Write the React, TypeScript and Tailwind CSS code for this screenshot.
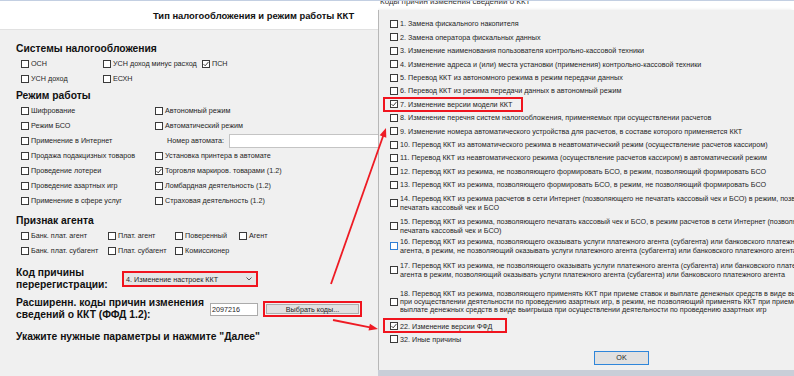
import React from "react";

const Check = () => (
  <svg width="6" height="6" viewBox="0 0 6 6" className="block">
    <path d="M0.5 3.1 L2.2 4.8 L5.5 0.9" fill="none" stroke="#2b2b2b" strokeWidth="0.9" />
  </svg>
);

function Cb({ checked = false, blue = false }: { checked?: boolean; blue?: boolean }) {
  return (
    <span
      className={`flex items-center justify-center w-[8px] h-[8px] shrink-0 bg-white border ${
        blue ? "border-[#2f7fd6]" : "border-[#3a3a3a]"
      }`}
    >
      {checked && <Check />}
    </span>
  );
}

function Opt({ label, checked }: { label: string; checked?: boolean }) {
  return (
    <div className="flex items-center gap-[2px] h-[15px]">
      <Cb checked={checked} />
      <span className="text-[7.2px] leading-[9px] text-[#1f1f1f] whitespace-nowrap">{label}</span>
    </div>
  );
}

function H({ children, className = "" }: { children: React.ReactNode; className?: string }) {
  return (
    <div className={`text-[10.3px] leading-[14px] h-[14px] font-bold text-[#111] whitespace-nowrap ${className}`}>
      {children}
    </div>
  );
}

type DI = {
  lines: string[];
  h: string;
  lh?: string;
  checked?: boolean;
  blue?: boolean;
  box?: string;
};

const S = "h-[13.4px]";

const items: DI[] = [
  { lines: ["1. Замена фискального накопителя"], h: S },
  { lines: ["2. Замена оператора фискальных данных"], h: S },
  { lines: ["3. Изменение наименования пользователя контрольно-кассовой техники"], h: S },
  { lines: ["4. Изменение адреса и (или) места установки (применения) контрольно-кассовой техники"], h: S },
  { lines: ["5. Перевод ККТ из автономного режима в режим передачи данных"], h: S },
  { lines: ["6. Перевод ККТ из режима передачи данных в автономный режим"], h: S },
  {
    lines: ["7. Изменение версии модели ККТ"],
    h: S,
    checked: true,
    box: "-left-[7px] -top-[1px] w-[140px] h-[15px]",
  },
  { lines: ["8. Изменение перечня систем налогообложения, применяемых при осуществлении расчетов"], h: S },
  { lines: ["9. Изменение номера автоматического устройства для расчетов, в составе которого применяется ККТ"], h: S },
  { lines: ["10. Перевод ККТ из автоматического режима в неавтоматический режим (осуществление расчетов кассиром)"], h: S },
  { lines: ["11. Перевод ККТ из неавтоматического режима (осуществление расчетов кассиром) в автоматический режим"], h: S },
  { lines: ["12. Перевод ККТ из режима, не позволяющего формировать БСО, в режим, позволяющий формировать БСО"], h: S },
  { lines: ["13. Перевод ККТ из режима, позволяющего формировать БСО, в режим, не позволяющий формировать БСО"], h: S },
  {
    lines: [
      "14. Перевод ККТ из режима расчетов в сети Интернет (позволяющего не печатать кассовый чек и БСО) в режим, позволяющий",
      "печатать кассовый чек и БСО",
    ],
    h: "h-[24px]",
  },
  {
    lines: [
      "15. Перевод ККТ из режима, позволяющего печатать кассовый чек и БСО, в режим расчетов в сети Интернет (позволяющего не",
      "печатать кассовый чек и БСО)",
    ],
    h: "h-[21px]",
  },
  {
    lines: [
      "16. Перевод ККТ из режима, позволяющего оказывать услуги платежного агента (субагента) или банковского платежного",
      "агента, в режим, не позволяющий оказывать услуги платежного агента (субагента) или банковского платежного агента",
    ],
    h: "h-[20px]",
    blue: true,
  },
  {
    lines: [
      "17. Перевод ККТ из режима, не позволяющего оказывать услуги платежного агента (субагента) или банковского платежного",
      "агента в режим, позволяющий оказывать услуги платежного агента (субагента) или банковского платежного агента",
    ],
    h: "h-[28px]",
  },
  {
    lines: [
      "18. Перевод ККТ из режима, позволяющего применять ККТ при приеме ставок и выплате денежных средств в виде выигрыша",
      "при осуществлении деятельности по проведению азартных игр, в режим, не позволяющий применять ККТ при приеме ставок и",
      "выплате денежных средств в виде выигрыша при осуществлении деятельности по проведению азартных игр",
    ],
    h: "h-[35px]",
    lh: "leading-[8px]",
  },
  {
    lines: ["22. Изменение версии ФФД"],
    h: S,
    checked: true,
    box: "-left-[7px] -top-[1px] w-[124px] h-[15px]",
  },
  { lines: ["32. Иные причины"], h: S },
];

function DItem({ it }: { it: DI }) {
  return (
    <div className={`relative flex items-center gap-[2px] shrink-0 ${it.h}`}>
      <Cb checked={it.checked} blue={it.blue} />
      <div className={`text-[7.2px] ${it.lh ?? "leading-[9px]"} text-[#1f1f1f] whitespace-nowrap`}>
        {it.lines.map((l) => (
          <div key={l}>{l}</div>
        ))}
      </div>
      {it.box && <div className={`absolute border-2 border-[#f0141e] ${it.box}`} />}
    </div>
  );
}

function MainWindow() {
  return (
    <div className="w-[378px] shrink-0 flex flex-col overflow-hidden">
      <div className="h-[29px] shrink-0 bg-white border-b border-[#e1e1e1] flex items-center pl-[153px] pt-[3px]">
        <span className="text-[9.4px] font-bold text-[#111] whitespace-nowrap">
          Тип налогообложения и режим работы ККТ
        </span>
      </div>
      <div className="flex flex-col pl-[16px]">
        <H className="mt-[12px]">Системы налогообложения</H>
        <div className="pl-[5px] grid grid-cols-[82px_99px_auto]">
          <Opt label="ОСН" />
          <Opt label="УСН доход минус расход" />
          <Opt label="ПСН" checked />
          <Opt label="УСН доход" />
          <Opt label="ЕСХН" />
        </div>

        <H className="mt-[3px]">Режим работы</H>
        <div className="pl-[5px] grid grid-cols-[134px_auto]">
          <Opt label="Шифрование" />
          <Opt label="Автономный режим" />
          <Opt label="Режим БСО" />
          <Opt label="Автоматический режим" />
          <Opt label="Применение в Интернет" />
          <div className="flex items-center h-[15px] pl-[12px] gap-[5px]">
            <span className="text-[7.2px] leading-[9px] text-[#1f1f1f] whitespace-nowrap">Номер автомата:</span>
            <div className="w-[200px] h-[14px] shrink-0 bg-white border border-[#c4c4c4]" />
          </div>
          <Opt label="Продажа подакцизных товаров" />
          <Opt label="Установка принтера в автомате" />
          <Opt label="Проведение лотереи" />
          <Opt label="Торговля маркиров. товарами (1.2)" checked />
          <Opt label="Проведение азартных игр" />
          <Opt label="Ломбардная деятельность (1.2)" />
          <Opt label="Применение в сфере услуг" />
          <Opt label="Страховая деятельность (1.2)" />
        </div>

        <H className="mt-[6px]">Признак агента</H>
        <div className="pl-[5px] grid grid-cols-[87px_67px_64px_auto]">
          <Opt label="Банк. плат. агент" />
          <Opt label="Плат. агент" />
          <Opt label="Поверенный" />
          <Opt label="Агент" />
          <Opt label="Банк. плат. субагент" />
          <Opt label="Плат. субагент" />
          <Opt label="Комиссионер" />
        </div>

        <div className="mt-[9px] flex items-center">
          <div className="w-[106px] shrink-0 text-[10.3px] leading-[12px] font-bold text-[#111] whitespace-nowrap">
            Код причины
            <br />
            перерегистрации:
          </div>
          <div className="w-[136px] h-[16px] shrink-0 border-2 border-[#f0141e] bg-[#e6e6e6] flex items-center justify-between pl-[2px] pr-[4px]">
            <span className="text-[7.2px] leading-[9px] text-[#1f1f1f] whitespace-nowrap">4. Изменение настроек ККТ</span>
            <svg width="6" height="4" viewBox="0 0 6 4">
              <path d="M0.5 0.5 L3 3 L5.5 0.5" fill="none" stroke="#444" strokeWidth="0.9" />
            </svg>
          </div>
        </div>

        <div className="mt-[6px] flex items-center">
          <div className="w-[194px] shrink-0 text-[10.3px] leading-[12px] font-bold text-[#111] whitespace-nowrap">
            Расширенн. коды причин изменения
            <br />
            сведений о ККТ (ФФД 1.2):
          </div>
          <div className="w-[48px] h-[13px] shrink-0 bg-white border border-[#ababab] flex items-center pl-[1px] text-[7.2px] leading-[9px] text-[#1f1f1f]">
            2097216
          </div>
          <div className="ml-[5px] w-[99px] h-[16px] shrink-0 border-2 border-[#f0141e] p-[1px]">
            <div className="w-full h-full bg-[#e1e1e1] border border-[#adadad] flex items-center justify-center text-[7.2px] leading-[9px] text-[#1f1f1f] whitespace-nowrap">
              Выбрать коды...
            </div>
          </div>
        </div>

        <H className="mt-[9px]">Укажите нужные параметры и нажмите "Далее"</H>
      </div>
    </div>
  );
}

function Dialog() {
  return (
    <div className="flex-1 min-w-0 flex flex-col overflow-hidden">
      <div className="h-[9px] bg-white shrink-0 overflow-hidden pl-[2px]">
        <div className="text-[8px] leading-[9px] -mt-[4px] text-[#333] whitespace-nowrap">
          Коды причин изменения сведений о ККТ
        </div>
      </div>
      <div className="flex-1 min-h-0 flex flex-col pl-[11px] pt-[7.3px] border-l border-[#b7b7b7] shadow-[-2px_0_3px_rgba(0,0,0,0.10)]">
        {items.map((it) => (
          <DItem key={it.lines[0]} it={it} />
        ))}
        <div className="ml-[204px] mt-[4.7px] w-[55px] h-[14px] shrink-0 border-[1.5px] border-[#2f86da] bg-[#e1e1e1] flex items-center justify-center text-[7.2px] leading-[9px] text-[#1f1f1f]">
          OK
        </div>
      </div>
      <div className="h-[6px] shrink-0 bg-[#c9ced8]" />
    </div>
  );
}

function Arrows() {
  return (
    <svg className="absolute left-0 top-0 pointer-events-none" width="794" height="376" viewBox="0 0 794 376">
      <line x1="331" y1="284" x2="383.3" y2="135.5" stroke="#ee1b24" strokeWidth="1.8" />
      <polygon points="386,128 386.3,137.7 379.7,135.3" fill="#ee1b24" />
      <line x1="333" y1="320" x2="370" y2="327.3" stroke="#ee1b24" strokeWidth="1.8" />
      <polygon points="378,329 368.5,330.6 369.9,323.8" fill="#ee1b24" />
    </svg>
  );
}

export default function App() {
  return (
    <div className="w-[794px] h-[376px] overflow-hidden bg-[#f0f0f0] flex flex-col relative font-['Liberation_Sans',Arial,sans-serif]">
      <div className="h-[1px] shrink-0 bg-[#c3cfe2]" />
      <div className="flex flex-1 min-h-0">
        <MainWindow />
        <Dialog />
      </div>
      <Arrows />
    </div>
  );
}
